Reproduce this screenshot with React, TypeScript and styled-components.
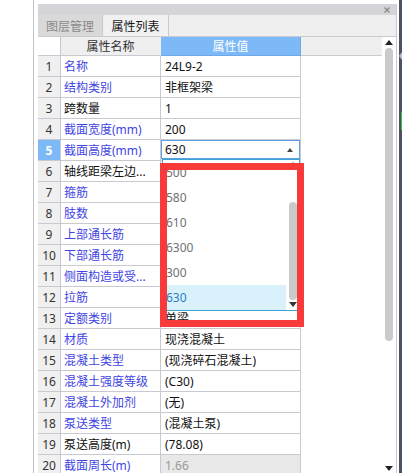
import React from "react";
import styled, { createGlobalStyle } from "styled-components";

const Global = createGlobalStyle`
  html, body { margin: 0; padding: 0; background: #ffffff; }
  body {
    width: 402px; height: 473px; overflow: hidden;
    font-family: "Noto Sans", "Noto Sans CJK SC", sans-serif;
    font-size: 12px; color: #111;
  }
  * { box-sizing: border-box; }
`;

const LINE = "#c9c9d1";

const Page = styled.div`
  position: relative;
  display: flex;
  width: 402px;
  height: 473px;
  overflow: hidden;
`;

const LeftSpace = styled.div`
  width: 33px;
  flex: none;
`;

const Frame = styled.div`
  flex: none;
  border-left: 1px solid #c2c2c6;
  padding: 4px 0 0 4px;
  display: flex;
`;

const Panel = styled.div`
  width: 359px;
  height: 469px;
  border-right: 1px solid ${LINE};
  display: flex;
  flex-direction: column;
`;

const Gap = styled.div`
  width: 2px;
  flex: none;
`;

const DarkStrip = styled.div`
  position: relative;
  width: 3px;
  flex: none;
  background: #4a5360;
`;

const Notch = styled.div`
  position: absolute;
  top: 52px;
  left: 0;
  width: 0;
  height: 0;
  border-top: 4px solid transparent;
  border-bottom: 4px solid transparent;
  border-right: 3px solid #b8bcc4;
`;

const GreenMark = styled.div`
  position: absolute;
  top: 112px;
  right: 0;
  width: 1px;
  height: 18px;
  background: #3cc04a;
`;

const TitleBar = styled.div`
  height: 11px;
  background: #d5d5d9;
  display: flex;
  align-items: center;
  justify-content: flex-end;
  padding-right: 6px;
`;

const TabRow = styled.div`
  height: 22px;
  background: #efefef;
  border-bottom: 1px solid ${LINE};
  display: flex;
`;

const Tab = styled.div<{ $active?: boolean }>`
  width: ${(p) => (p.$active ? 66 : 65)}px;
  height: 21px;
  display: flex;
  align-items: center;
  justify-content: center;
  border-right: 1px solid ${LINE};
  background: ${(p) => (p.$active ? "#f1f1f1" : "#d9d9d9")};
  color: ${(p) => (p.$active ? "#1a1a1a" : "#8a8a8a")};
  font-size: 12px;
`;

const GridArea = styled.div`
  display: flex;
  height: 436px;
  overflow: hidden;
`;

const Table = styled.div`
  width: 344px;
  flex: none;
`;

const COLS = "23px 100px 140px 81px";

const HeaderRow = styled.div`
  display: grid;
  grid-template-columns: ${COLS};
  height: 19px;
`;

const HeadCell = styled.div<{ $tone: "white" | "gray" | "blue" }>`
  display: flex;
  align-items: center;
  justify-content: center;
  border-bottom: 1px solid ${(p) => (p.$tone === "blue" ? "#6ea8ea" : LINE)};
  border-right: 1px solid ${(p) => (p.$tone === "blue" ? "#6ea8ea" : p.$tone === "white" ? LINE : "transparent")};
  background: ${(p) => (p.$tone === "blue" ? "#7db9f7" : p.$tone === "gray" ? "#efefef" : "#ffffff")};
  color: ${(p) => (p.$tone === "blue" ? "#ffffff" : "#333")};
`;

const Row = styled.div`
  display: grid;
  grid-template-columns: ${COLS};
  height: 21px;
`;

const NumCell = styled.div<{ $active?: boolean }>`
  display: flex;
  align-items: center;
  justify-content: center;
  border-right: 1px solid ${LINE};
  border-bottom: 1px solid ${LINE};
  background: ${(p) => (p.$active ? "#7db9f7" : "#f0f0f0")};
  color: ${(p) => (p.$active ? "#ffffff" : "#333")};
  font-weight: ${(p) => (p.$active ? 700 : 400)};
`;

const LabelCell = styled.div<{ $link?: boolean }>`
  display: flex;
  align-items: center;
  padding-left: 3px;
  border-right: 1px solid ${LINE};
  border-bottom: 1px solid ${LINE};
  color: ${(p) => (p.$link ? "#3f45e2" : "#111")};
  white-space: nowrap;
  overflow: hidden;
`;

const ValueCell = styled.div<{ $disabled?: boolean }>`
  position: relative;
  display: flex;
  align-items: center;
  padding-left: 4px;
  border-right: 1px solid ${LINE};
  border-bottom: 1px solid ${LINE};
  background: ${(p) => (p.$disabled ? "#e8e8e8" : "#ffffff")};
  color: ${(p) => (p.$disabled ? "#9a9a9a" : "#111")};
  white-space: nowrap;
`;

const EditCell = styled.div`
  position: relative;
  border-right: 1px solid ${LINE};
  border-bottom: 1px solid ${LINE};
`;

const Filler = styled.div``;

const ComboBox = styled.div`
  height: 19px;
  border: 1px solid #5d9fe2;
  display: flex;
  align-items: center;
  justify-content: space-between;
  padding: 0 6px 0 3px;
  color: #111;
`;

const TinyUp = styled.span<{ $size?: number; $color?: string }>`
  display: block;
  width: 0;
  height: 0;
  border-left: ${(p) => p.$size ?? 3}px solid transparent;
  border-right: ${(p) => p.$size ?? 3}px solid transparent;
  border-bottom: ${(p) => Math.round((p.$size ?? 3) * 1.2)}px solid ${(p) => p.$color ?? "#444"};
`;

const TinyDown = styled.span<{ $size?: number; $color?: string }>`
  display: block;
  width: 0;
  height: 0;
  border-left: ${(p) => p.$size ?? 3}px solid transparent;
  border-right: ${(p) => p.$size ?? 3}px solid transparent;
  border-top: ${(p) => Math.round((p.$size ?? 3) * 1.2)}px solid ${(p) => p.$color ?? "#444"};
`;

const Dropdown = styled.div`
  position: absolute;
  top: 19px;
  left: 1px;
  width: 138px;
  height: 152px;
  border: 1px solid #3ba3d6;
  background: #ffffff;
  display: flex;
  z-index: 5;
`;

const OptionList = styled.div`
  width: 123px;
  display: flex;
  flex-direction: column;
`;

const Option = styled.div<{ $selected?: boolean }>`
  height: 25px;
  display: flex;
  align-items: center;
  padding-left: 3px;
  background: ${(p) => (p.$selected ? "#d8f1fa" : "transparent")};
  color: ${(p) => (p.$selected ? "#2b7fbf" : "#717171")};
`;

const DropScroll = styled.div`
  width: 13px;
  display: flex;
  flex-direction: column;
  align-items: center;
  padding-top: 2px;
`;

const Thumb = styled.div<{ $top: number; $height: number }>`
  width: 8px;
  margin-top: ${(p) => p.$top}px;
  height: ${(p) => p.$height}px;
  border-radius: 4px;
  background: #cacaca;
`;

const MainScroll = styled.div`
  width: 14px;
  flex: none;
  display: flex;
  flex-direction: column;
  align-items: center;
  padding-top: 3px;
`;

const Spacer = styled.div`
  flex: 1;
`;

const BottomArrow = styled.div`
  margin-bottom: 2px;
`;

const Annotation = styled.div`
  position: absolute;
  left: 160px;
  top: 163px;
  width: 144px;
  height: 164px;
  border: 7px solid #f93a3a;
  pointer-events: none;
  z-index: 10;
`;

type Item = { label: string; link: boolean; value?: string; disabled?: boolean };

const items: Item[] = [
  { label: "名称", link: true, value: "24L9-2" },
  { label: "结构类别", link: true, value: "非框架梁" },
  { label: "跨数量", link: false, value: "1" },
  { label: "截面宽度(mm)", link: true, value: "200" },
  { label: "截面高度(mm)", link: true, value: "630" },
  { label: "轴线距梁左边...", link: false, value: "(315)" },
  { label: "箍筋", link: true, value: "" },
  { label: "肢数", link: true, value: "" },
  { label: "上部通长筋", link: true, value: "" },
  { label: "下部通长筋", link: true, value: "" },
  { label: "侧面构造或受...", link: true, value: "" },
  { label: "拉筋", link: true, value: "" },
  { label: "定额类别", link: true, value: "单梁" },
  { label: "材质", link: true, value: "现浇混凝土" },
  { label: "混凝土类型", link: true, value: "(现浇碎石混凝土)" },
  { label: "混凝土强度等级", link: true, value: "(C30)" },
  { label: "混凝土外加剂", link: true, value: "(无)" },
  { label: "泵送类型", link: true, value: "(混凝土泵)" },
  { label: "泵送高度(m)", link: false, value: "(78.08)" },
  { label: "截面周长(m)", link: true, value: "1.66", disabled: true },
];

const options = ["500", "580", "610", "6300", "300", "630"];

const CloseIcon = () => (
  <svg width="6" height="6" viewBox="0 0 6 6">
    <path d="M0.5 0.5 L5.5 5.5 M5.5 0.5 L0.5 5.5" stroke="#8a8a8a" strokeWidth="1.3" />
  </svg>
);

export default function App() {
  return (
    <>
      <Global />
      <Page>
        <LeftSpace />
        <Frame>
          <Panel>
            <TitleBar>
              <CloseIcon />
            </TitleBar>
            <TabRow>
              <Tab>图层管理</Tab>
              <Tab $active>属性列表</Tab>
            </TabRow>
            <GridArea>
              <Table>
                <HeaderRow>
                  <HeadCell $tone="white" />
                  <HeadCell $tone="gray">属性名称</HeadCell>
                  <HeadCell $tone="blue">属性值</HeadCell>
                  <HeadCell $tone="gray" />
                </HeaderRow>
                {items.map((it, i) => {
                  const n = i + 1;
                  const editing = n === 5;
                  const covered = n >= 6 && n <= 12;
                  return (
                    <Row key={n}>
                      <NumCell $active={editing}>{n}</NumCell>
                      <LabelCell $link={it.link}>{it.label}</LabelCell>
                      {editing ? (
                        <EditCell>
                          <ComboBox>
                            <span>{it.value}</span>
                            <TinyUp $size={3} />
                          </ComboBox>
                          <Dropdown>
                            <OptionList>
                              {options.map((o, k) => (
                                <Option key={o + k} $selected={k === options.length - 1}>
                                  {o}
                                </Option>
                              ))}
                            </OptionList>
                            <DropScroll>
                              <TinyUp $size={3} />
                              <Thumb $top={36} $height={98} />
                              <Spacer />
                              <TinyDown $size={4} $color="#333" />
                              <div style={{ height: 3 }} />
                            </DropScroll>
                          </Dropdown>
                        </EditCell>
                      ) : (
                        <ValueCell $disabled={it.disabled}>{covered ? "" : it.value}</ValueCell>
                      )}
                      <Filler />
                    </Row>
                  );
                })}
              </Table>
              <MainScroll>
                <TinyUp $size={4} $color="#222" />
                <Thumb $top={3} $height={293} />
                <Spacer />
                <BottomArrow>
                  <TinyDown $size={4} $color="#222" />
                </BottomArrow>
              </MainScroll>
            </GridArea>
          </Panel>
        </Frame>
        <Gap />
        <DarkStrip>
          <Notch />
          <GreenMark />
        </DarkStrip>
        <Annotation />
      </Page>
    </>
  );
}
